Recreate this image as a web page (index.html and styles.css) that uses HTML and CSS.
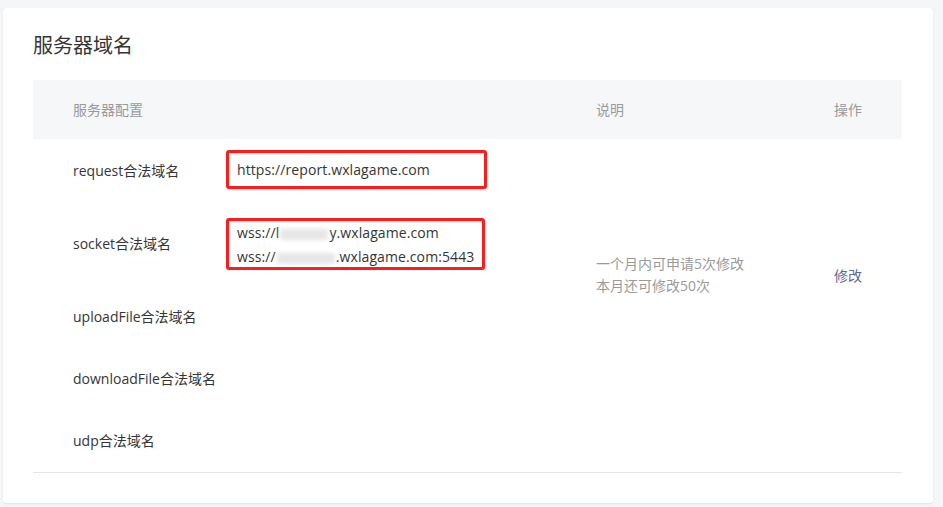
FILE: index.html
```html
<!DOCTYPE html>
<html lang="zh-CN">
<head>
<meta charset="utf-8">
<title>服务器域名</title>
<link rel="stylesheet" href="styles.css">
</head>
<body>
<div class="card">
  <h2 class="title">服务器域名</h2>
  <div class="table">
    <div class="th th-label">服务器配置</div>
    <div class="th"></div>
    <div class="th">说明</div>
    <div class="th">操作</div>

    <div class="label r1">request合法域名</div>
    <div class="value r1"><div class="box box1">https://report.wxlagame.com</div></div>

    <div class="label r2">socket合法域名</div>
    <div class="value r2"><div class="box box2">
      <div class="line">wss://l<span class="blur b1"></span>y.wxlagame.com</div>
      <div class="line">wss://<span class="blur b2"></span>.wxlagame.com:5443</div>
    </div></div>

    <div class="label r3">uploadFile合法域名</div>
    <div class="value r3"></div>
    <div class="label r4">downloadFile合法域名</div>
    <div class="value r4"></div>
    <div class="label r5">udp合法域名</div>
    <div class="value r5"></div>

    <div class="desc">一个月内可申请5次修改<br>本月还可修改50次</div>
    <div class="op"><a class="link" href="#">修改</a></div>
  </div>
</div>
</body>
</html>
```
FILE: styles.css
```css
html, body {
  margin: 0;
  padding: 0;
}
body {
  background: #f5f6f8;
  font-family: "Open Sans", "Noto Sans CJK SC", sans-serif;
  font-size: 14px;
  color: #353535;
  padding: 8px 10px 4px 3px;
}
.card {
  background: #fff;
  border-radius: 4px;
  box-shadow: 0 1px 2px rgba(0,0,0,0.08);
  padding: 22px 31px 31px 30px;
  height: 495px;
  box-sizing: border-box;
}
.title {
  margin: 0;
  font-family: "Noto Sans CJK SC", sans-serif;
  font-weight: normal;
  font-size: 20px;
  line-height: 30px;
  color: #353535;
  height: 50px;
}
.table {
  display: grid;
  grid-template-columns: 193px 370px 238px 1fr;
  grid-template-rows: 59px 63px 84px 62px 62px 62px;
  border-bottom: 1px solid #e4e6eb;
}
.th {
  background: #f6f7f9;
  color: #9a9a9a;
  display: flex;
  align-items: center;
  line-height: 20px;
}
.th-label {
  padding-left: 40px;
}
.label {
  grid-column: 1;
  padding-left: 40px;
  display: flex;
  align-items: center;
  line-height: 20px;
  white-space: nowrap;
}
.value {
  grid-column: 2;
  display: flex;
  align-items: center;
}
.r1 { grid-row: 2; }
.r2 { grid-row: 3; }
.r3 { grid-row: 4; }
.r4 { grid-row: 5; }
.r5 { grid-row: 6; }
.r1.value { padding-bottom: 2px; }
.box {
  border: 3px solid #ff1c1c;
  border-radius: 3px;
  padding: 0 8px;
  box-sizing: border-box;
  line-height: 24px;
  color: #353535;
  white-space: nowrap;
  letter-spacing: 0.1px;
}
.box1 {
  width: 261px;
  height: 39px;
  display: flex;
  align-items: center;
}
.box2 {
  width: 259px;
  height: 52px;
  padding-top: 0;
}
.line {
  height: 24px;
}
.blur {
  display: inline-block;
  vertical-align: middle;
  height: 11px;
  background: #e6e6e6;
  filter: blur(2px);
  border-radius: 3px;
  margin: 0 1px;
}
.b1 { width: 48px; }
.b2 { width: 58px; }
.desc {
  grid-column: 3;
  grid-row: 2 / 6;
  display: flex;
  align-items: center;
  color: #9a9a9a;
  line-height: 22px;
}
.op {
  grid-column: 4;
  grid-row: 2 / 6;
  display: flex;
  align-items: center;
}
.link {
  color: #576b95;
  text-decoration: none;
}
```
